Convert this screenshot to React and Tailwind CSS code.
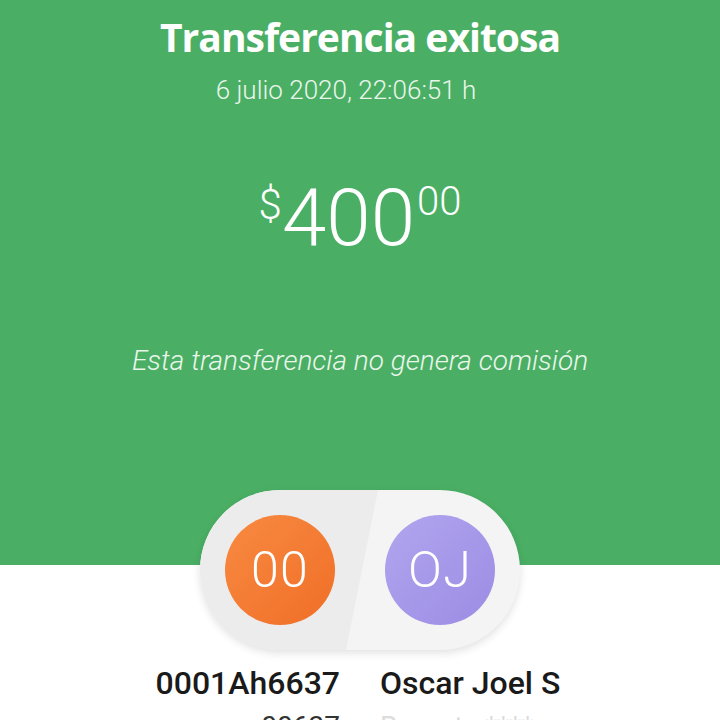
import React from 'react';

const font = { fontFamily: 'Roboto, "Open Sans", sans-serif' };

function Avatar({ initials, from, to }) {
  return (
    <div
      className={`w-[110px] h-[110px] rounded-full flex items-center justify-center bg-linear-135 ${from} ${to}`}
    >
      <span className="text-white text-[50px] font-light leading-none tracking-wide">{initials}</span>
    </div>
  );
}

export default function App() {
  return (
    <div className="w-[720px] h-[720px] overflow-hidden bg-white" style={font}>
      <div className="h-[565px] bg-[#4aaf64] flex flex-col items-center text-white">
        <h1 className="mt-[12px] text-[39px] font-bold leading-[50px] tracking-tight font-['Open_Sans',sans-serif]">
          Transferencia exitosa
        </h1>
        <p className="mt-[12px] mr-[28px] text-[26px] font-light leading-[32px] text-[#eaf6ec]">6 julio 2020, 22:06:51 h</p>
        <div className="mt-[72px] flex items-start leading-none">
          <span className="text-[42px] font-light mt-[6px]">$</span>
          <span className="text-[80px] font-light">400</span>
          <span className="text-[40px] font-light mt-[4px] ml-[2px]">00</span>
        </div>
        <p className="mt-[82px] text-[28px] italic font-light text-[#eaf6ec]">Esta transferencia no genera comisión</p>
      </div>

      <div className="-mt-[75px] flex justify-center">
        <div className="relative w-[320px] h-[160px] rounded-full overflow-hidden flex items-center justify-between px-[25px] bg-[#f4f4f4] shadow-[0_3px_8px_rgba(0,0,0,0.12)]">
          <div className="absolute inset-0 bg-[#ececec] [clip-path:polygon(0_0,178px_0,146px_100%,0_100%)]" />
          <div className="relative">
            <Avatar initials="00" from="from-[#f88a41]" to="to-[#f06e26]" />
          </div>
          <div className="relative">
            <Avatar initials="OJ" from="from-[#b1a5ee]" to="to-[#9c8ce4]" />
          </div>
        </div>
      </div>

      <div className="mt-[14px] flex justify-center gap-[40px] text-[32px] font-medium text-[#1a1a1a] leading-[38px]">
        <span className="w-[200px] text-right">0001Ah6637</span>
        <span className="w-[200px] whitespace-nowrap">Oscar Joel S</span>
      </div>
      <div className="flex justify-center gap-[40px] text-[28px] leading-[34px] mt-[8px]">
        <span className="w-[200px] text-right text-[#333]">00637</span>
        <span className="w-[200px] text-[#dcdcdc]">Banorte ****</span>
      </div>
    </div>
  );
}
